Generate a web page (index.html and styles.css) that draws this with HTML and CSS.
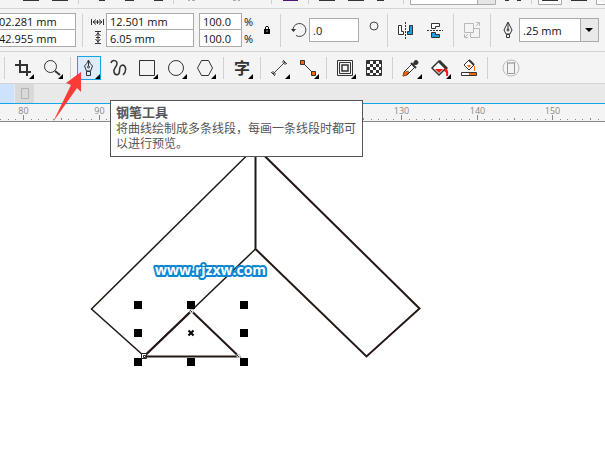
FILE: index.html
```html
<!DOCTYPE html>
<html lang="zh">
<head>
<meta charset="utf-8">
<title>Drawing</title>
<link rel="stylesheet" href="styles.css">
</head>
<body>
<div class="app">
  <div class="standard-bar" aria-hidden="true">
    <svg width="605" height="8" viewBox="0 0 605 8">
      <path d="M23 .5h16M52 .5h16M99 .5h6M125 .5h9M154 .5h9M319 .5h16M348 .5h16M377 .5h7M505 .5h4M517 .5h4M571 .5h16" stroke="#333"/>
      <path d="M188 .5h2M192 .5h3M233 .5h3M238 .5h2" stroke="#aaa"/>
      <path d="M283 .5h15" stroke="#4b1a78"/>
      <path d="M78.500 0v4M173.500 0v4M271.500 0v4M308.500 0v4M403.500 0v4M531.500 0v4" stroke="#d0d0d0"/>
      <path d="M410.500-1V4.500H495.500V-1" fill="#fff" stroke="#aaa"/>
      <path d="M478 -1h17v5h-17z" fill="#e6e6e6"/><path d="M477.500 0v4" stroke="#aaa"/>
      <path d="M538.500-1V4.500H561.500V-1M596.500-1V4.500H606" fill="#fff" stroke="#aaa"/>
      <path d="M542 .5h16" stroke="#333"/>
    </svg>
  </div>

  <div class="property-bar">
    <div class="pair position">
      <input class="field" aria-label="X" value="02.281 mm">
      <input class="field" aria-label="Y" value="42.955 mm">
    </div>
    <span class="rule"></span>
    <svg class="size-icons" width="14" height="34" viewBox="0 0 14 34" fill="none" stroke="#333">
      <path d="M.5 6v6M12.500 6v6M2 9h9M5 6.500L2 9l3 2.500M8 6.500L11 9l-3 2.500M6.500 7v4"/>
      <path d="M4 18.500h6M4 30.500h6M7 19v11M4.500 23L7 20l2.500 3M4.500 26L7 29l2.500-3M5 24.500h4"/>
    </svg>
    <div class="pair size">
      <input class="field" aria-label="Width" value="12.501 mm">
      <input class="field" aria-label="Height" value="6.05 mm">
    </div>
    <div class="pair scale">
      <input class="field" aria-label="Horizontal scale" value="100.0">
      <input class="field" aria-label="Vertical scale" value="100.0">
    </div>
    <div class="percents"><span>%</span><span>%</span></div>
    <button class="plain lock" aria-label="Lock ratio">
      <svg width="8" height="10" viewBox="0 0 8 10"><path d="M1 4h6v5H1z"/><path d="M2.500 4V2Q4 .5 5.500 2v2" fill="none" stroke="#111"/><path d="M4 5v2" stroke="#aaa"/></svg>
    </button>
    <span class="rule"></span>
    <svg class="rotate-icon" width="18" height="18" viewBox="0 0 18 18" fill="none" stroke="#444"><path d="M3 10V8a6.500 6.500 0 1 1 3 6.500"/><path d="M1 8h5L3.500 11z" fill="#333" stroke="none"/></svg>
    <input class="field angle" aria-label="Rotation" value=".0">
    <svg class="degree" width="10" height="10" viewBox="0 0 10 10"><circle cx="5" cy="5" r="4" fill="none" stroke="#444"/></svg>
    <span class="rule"></span>
    <div class="mirrors">
      <button class="plain" aria-label="Mirror horizontally">
        <svg width="16" height="18" viewBox="0 0 16 18"><path d="M7.500 1v17" stroke="#333" stroke-dasharray="2 1"/><path d="M.5 4.500h3v6h2v3h-5z" fill="#fff" stroke="#333"/><path d="M14.500 4.500h-3v6h-2v3h5z" fill="#1ba1e2" stroke="#333"/></svg>
      </button>
      <button class="plain" aria-label="Mirror vertically">
        <svg width="16" height="18" viewBox="0 0 16 18"><path d="M0 9.500h16" stroke="#333" stroke-dasharray="2 1"/><path d="M4.500 7.500v-5h8v3h-4v2z" fill="#fff" stroke="#333"/><path d="M4.500 11.500v5h8v-3h-4v-2z" fill="#1ba1e2" stroke="#333"/></svg>
      </button>
    </div>
    <span class="rule"></span>
    <button class="plain order" aria-label="Convert" disabled>
      <svg width="17" height="18" viewBox="0 0 17 18" fill="none" stroke="#b8b8b8"><path d="M.5 2.500h9v9h-9zM9.500 7.500h6v9h-9v-5"/><path d="M12 5l3-3M12 1.500h3.500V5M4 13l-3 3M.5 13v3.500H4"/></svg>
    </button>
    <span class="rule"></span>
    <svg class="outline-icon" width="10" height="18" viewBox="0 0 10 18" fill="none" stroke="#333"><path d="M5 1L1 9l2 4h4l2-4zM5 2v7M3.500 13.500h3v3h-3z"/><circle cx="5" cy="9" r="1"/></svg>
    <div class="combo">
      <select aria-label="Outline width"><option>.25 mm</option></select>
      <svg width="18" height="22" viewBox="0 0 18 22"><path d="M0 0h18v22H0z" fill="#e9e9e9"/><path d="M.5 0v22" stroke="#aaa"/><path d="M5 9h8l-4 4z"/></svg>
    </div>
  </div>

  <div class="toolbox">
    <span class="rule"></span>
    <div class="group">
      <button class="tool" aria-label="裁剪工具"><svg viewBox="0 0 24 24" fill="none" stroke="#333"><path d="M4 9h12v11M9 4v12h11" stroke-width="2"/><path class="flyout" d="M23 18v5h-5z"/></svg></button>
      <button class="tool" aria-label="缩放工具"><svg viewBox="0 0 24 24" fill="none" stroke="#333"><circle cx="10.500" cy="10.500" r="6"/><path d="M15 15l5 4" stroke-width="2"/><path class="flyout" d="M23 18v5h-5z"/></svg></button>
    </div>
    <span class="rule"></span>
    <div class="group">
      <button class="tool active" aria-label="钢笔工具"><svg viewBox="0 0 24 24" fill="none" stroke="#333"><path d="M11.500 4Q10 8 7.500 10l2 5h4l2-5Q13 8 11.500 4zM11.500 5v5M9.500 15.500h4v4h-4z"/><circle cx="11.500" cy="11" r="1"/><path class="flyout" d="M23 18v5h-5z"/></svg></button>
      <button class="tool" aria-label="曲线"><svg viewBox="0 0 24 24" fill="none" stroke="#333"><path d="M5 7C6 3.500 11 4 11 7.500C11 11 7 12 8 16C9 20 13.500 19.500 13.500 15C13.500 11 14 9 17 9C20.500 10 20.500 16 17 19" stroke-width="1.500"/></svg></button>
      <button class="tool" aria-label="矩形工具"><svg viewBox="0 0 24 24" fill="none" stroke="#333"><path d="M4.500 4.500h15v15h-15z"/><path class="flyout" d="M23 18v5h-5z"/></svg></button>
      <button class="tool" aria-label="椭圆工具"><svg viewBox="0 0 24 24" fill="none" stroke="#333"><circle cx="12" cy="12" r="7.500"/><path class="flyout" d="M23 18v5h-5z"/></svg></button>
      <button class="tool" aria-label="多边形工具"><svg viewBox="0 0 24 24" fill="none" stroke="#333"><path d="M4.500 12l4-7.500h7l4 7.500-4 7.500h-7z"/><path class="flyout" d="M23 18v5h-5z"/></svg></button>
    </div>
    <span class="rule"></span>
    <div class="group">
      <button class="tool" aria-label="文本工具"><svg viewBox="0 0 24 24"><text class="glyph" x="4" y="18">字</text><path class="flyout" d="M23 18v5h-5z"/></svg></button>
    </div>
    <span class="rule"></span>
    <div class="group">
      <button class="tool" aria-label="度量工具"><svg viewBox="0 0 24 24" fill="none" stroke="#444"><path d="M6 18L18 6M4 16l4 4M16 4l4 4M6 15v3h3M15 6h3v3"/><path class="flyout" d="M23 18v5h-5z"/></svg></button>
      <button class="tool" aria-label="连接器工具"><svg viewBox="0 0 24 24" fill="none" stroke="#333"><path d="M8 8l8 8"/><path d="M4.500 4.500h4v4h-4zM15.500 15.500h4v4h-4z" fill="#f60"/><path class="flyout" d="M23 18v5h-5z"/></svg></button>
    </div>
    <span class="rule"></span>
    <div class="group">
      <button class="tool" aria-label="轮廓图工具"><svg viewBox="0 0 24 24" fill="none" stroke="#333"><path d="M4.500 4.500h15v15h-15zM6.500 6.500h11v11h-11z"/><path d="M9 9h6v6H9z" stroke-width="1.500"/><path class="flyout" d="M23 18v5h-5z"/></svg></button>
      <button class="tool" aria-label="透明度工具"><svg viewBox="0 0 24 24" fill="none" stroke="#333"><path d="M4.500 4.500h15v15h-15z" fill="#fff"/><path d="M5 6.500h14M5 12.500h14M5 18.500h14" stroke-width="3" stroke-dasharray="3 3"/><path d="M8 9.500h11M8 15.500h11" stroke-width="3" stroke-dasharray="3 3"/></svg></button>
    </div>
    <span class="rule"></span>
    <div class="group">
      <button class="tool" aria-label="颜色滴管工具"><svg viewBox="0 0 24 24" fill="none" stroke="#333"><path d="M13 8L5 16l-1 4 4-1 8-8z" fill="#fff"/><path d="M8 15l-3 2-1 3 3-1 3-3z" fill="#f60" stroke="#b84c08"/><path d="M12 7l5 5M14 9l4-4" stroke-width="2"/><circle cx="17" cy="6.500" r="2" fill="#333"/><path class="flyout" d="M23 18v5h-5z"/></svg></button>
      <button class="tool" aria-label="交互式填充工具"><svg viewBox="0 0 24 24" fill="none" stroke="#333"><path d="M11 5l7 7-7 7-7-7z" fill="#fff" stroke-width="1.500"/><path d="M11 5l8 8" stroke-width="3"/><path d="M7 13h8l-4 4z" fill="#f11" stroke="none"/><path d="M17 12q4 1 3 8h-2q1-4-2-5z" fill="#f11" stroke="none"/><path class="flyout" d="M23 18v5h-5z"/></svg></button>
      <button class="tool" aria-label="智能填充工具"><svg viewBox="0 0 24 24" fill="none" stroke="#333"><path d="M12 4l5 5-5 5-5-5z" fill="#fff"/><path d="M12 4l5 5" stroke-width="2"/><path d="M10 9h4l-2 3z" fill="#f60" stroke="none"/><path d="M17.500 10v5" stroke="#f60"/><path d="M4.500 16.500h15v3h-15z" fill="#fff"/><path d="M12 17h7v2h-7z" fill="#f60" stroke="none"/></svg></button>
    </div>
    <span class="rule"></span>
    <div class="group last">
      <button class="tool" aria-label="页面" disabled><svg viewBox="0 0 24 24" fill="none" stroke="#bbb"><circle cx="12" cy="12" r="8"/><path d="M8.500 6.500h7v11h-7z" fill="#f4f4f4" stroke="#999"/><path d="M9 7h6" stroke-width="2"/></svg></button>
    </div>
  </div>

  <div class="tabs">
    <span class="tab current"></span>
    <button class="tab" aria-label="文档"><svg width="8" height="11" viewBox="0 0 8 11"><path d="M.5.5h7v10h-7z" fill="none" stroke="#b4b4b4"/></svg></button>
  </div>

  <svg class="ruler" height="18" role="img" aria-label="Ruler">
    <g id="ticks" stroke="#888"></g>
    <g id="labels" class="ruler-text"></g>
  </svg>

  <main class="canvas">
    <svg width="605" height="333" viewBox="0 122 605 333">
      <g fill="none" stroke="#231815">
        <path d="M255.500 147L91.500 309 144 356 255.500 249" stroke-width="1.500"/>
        <path d="M255.500 147V249L366.500 356.500 419.500 308.500z" stroke-width="2"/>
        <path d="M191.500 311L239 356.500H144z" stroke-width="2"/>
      </g>
      <path d="M134 301h8v8h-8zM187 301h8v8h-8zM240 301h8v8h-8zM134 329h8v8h-8zM240 329h8v8h-8zM134 358h8v8h-8zM187 358h8v8h-8zM240 358h8v8h-8z"/>
      <path d="M188.500 330.500l5 5M193.500 330.500l-5 5" stroke="#000" stroke-width="2"/>
      <g fill="#fff" stroke="#222"><path d="M141.500 353.500h5v5h-5z"/><path d="M143.500 355.500h2v2h-2z"/><path d="M190 309.500h3v3h-3zM237 354.500h3v3h-3z" stroke="#b9c6cc"/><path d="M190 310l2 2M237 355l2 2"/></g>
      <text class="site" x="155" y="275">www.rjzxw.com</text>
    </svg>
  </main>

  <div class="tooltip" role="tooltip">
    <strong>钢笔工具</strong>
    <p>将曲线绘制成多条线段，每画一条线段时都可以进行预览。</p>
  </div>
  <svg class="pointer" width="30" height="52" viewBox="0 0 30 52"><path d="M28 1L13 12l5 2L0 51 24 17l4 4z" fill="#fb3b38"/></svg>
</div>
<script src="ruler.js"></script>
</body>
</html>
```
FILE: styles.css
```css
* { box-sizing: border-box; }

body {
  margin: 0;
  background: #fff;
  color: #111;
  font-family: "Open Sans", "Noto Sans CJK SC", sans-serif;
  font-size: 11px;
  overflow: hidden;
}

svg { display: block; flex: none; }

.app { position: relative; }

.standard-bar {
  height: 9px;
  background: #f4f4f4;
  border-bottom: 1px solid #d4d4d4;
  overflow: hidden;
}

.property-bar {
  display: flex;
  align-items: center;
  height: 43px;
  background: #f4f4f4;
  border-bottom: 1px solid #d4d4d4;
}

.rule {
  flex: none;
  width: 1px;
  height: 33px;
  background: #d0d0d0;
}

.field {
  display: block;
  width: 100%;
  height: 17px;
  margin: 0;
  padding: 0 3px;
  border: 1px solid #aaa;
  border-radius: 0;
  background: #fff;
  color: #111;
  font: inherit;
  line-height: 15px;
}

.pair { flex: none; }
.pair .field + .field { border-top: 0; }
.position { width: 78px; margin: 0 6px 0 -2px; }
.position .field { padding: 0; }
.size-icons { margin: 0 1px 0 8px; }
.size { width: 88px; }
.scale { width: 43px; margin-left: 5px; }

.percents {
  display: flex;
  flex-direction: column;
  width: 12px;
  margin-left: 2px;
  line-height: 17px;
}

.plain {
  flex: none;
  padding: 0;
  border: 0;
  background: none;
}

.lock { margin: 0 9px 0 7px; }
.rotate-icon { margin: 0 1px 0 9px; }
.angle { flex: none; width: 50px; height: 24px; }
.degree { margin: 0 8px 8px 10px; }
.mirrors { display: flex; gap: 13px; margin: 0 10px; }
.order { margin: 0 9px 0 10px; }
.outline-icon { margin: 0 6px 0 12px; }

.combo {
  display: flex;
  flex: none;
  width: 80px;
  height: 24px;
  border: 1px solid #aaa;
  background: #fff;
}

.combo select {
  flex: 1;
  min-width: 0;
  padding: 0 3px;
  border: 0;
  background: none;
  appearance: none;
  color: #111;
  font: inherit;
}

.combo svg { pointer-events: none; }

.toolbox {
  display: flex;
  align-items: center;
  height: 32px;
  padding-left: 4px;
  background: #f4f4f4;
  border-bottom: 1px solid #d4d4d4;
}

.toolbox .rule { height: 22px; }
.group { display: flex; gap: 5px; margin: 0 6px; }
.group.last { margin-left: 11px; }

.tool {
  width: 24px;
  height: 24px;
  padding: 0;
  border: 0;
  background: none;
}

.tool svg { width: 24px; height: 24px; }

.tool.active {
  background: #dcecfc;
  outline: 1px solid #12a5e8;
  outline-offset: -1px;
}

.flyout { fill: #000; stroke: none; }
.glyph { font: bold 16px "Noto Sans CJK SC", sans-serif; fill: #333; }

.tabs {
  display: flex;
  gap: 1px;
  height: 20px;
  background: #e9e9e9;
  border-bottom: 1px solid #12a5e8;
}

.tab {
  display: grid;
  place-items: center;
  width: 19px;
  padding: 0;
  border: 0;
  background: #d9d9d9;
}

.tab.current { width: 14px; background: #cce2ff; }

.ruler {
  width: 100%;
  background: #f4f4f4;
  border-bottom: 1px solid #888;
}

.ruler-text { fill: #888; font-size: 9px; text-anchor: middle; }

.site {
  font: bold 14px "Open Sans", sans-serif;
  fill: #fff;
  stroke: #0b86d1;
  stroke-width: 4px;
  stroke-linejoin: round;
  paint-order: stroke;
}

.tooltip {
  position: absolute;
  top: 100px;
  left: 110px;
  width: 253px;
  padding: 2px 5px 6px;
  border: 1px solid #555;
  background: #fff;
  color: #555;
  font: 12px/15px "Noto Sans CJK SC", sans-serif;
}

.tooltip strong { display: block; font-size: 13px; line-height: 17px; }
.tooltip p { margin: 0; }

.pointer { position: absolute; top: 71px; left: 53px; }
```
FILE: ruler.js
```js
// Ten document units span STEP pixels; FIRST is where the 80 mark falls.
const STEP = 75.6;
const FIRST = 23;
const NS = "http://www.w3.org/2000/svg";
const ticks = document.getElementById("ticks");
const labels = document.getElementById("labels");
const tip = document.querySelector(".tooltip").getBoundingClientRect();

for (let i = -4; FIRST + i * STEP / 10 < window.innerWidth; i++) {
  const x = Math.round(FIRST + i * STEP / 10) + 0.5;
  const length = i % 10 === 0 ? 5 : i % 5 === 0 ? 2 : 1;
  const tick = document.createElementNS(NS, "path");
  tick.setAttribute("d", `M${x} ${16 - length}v${length}`);
  ticks.append(tick);
  // The open tooltip covers the labels beneath it.
  const covered = x > tip.left && x < tip.right;
  if (i % 10 === 0 && !covered) {
    const label = document.createElementNS(NS, "text");
    label.setAttribute("x", x);
    label.setAttribute("y", 10);
    label.textContent = 80 + i;
    labels.append(label);
  }
}
```
